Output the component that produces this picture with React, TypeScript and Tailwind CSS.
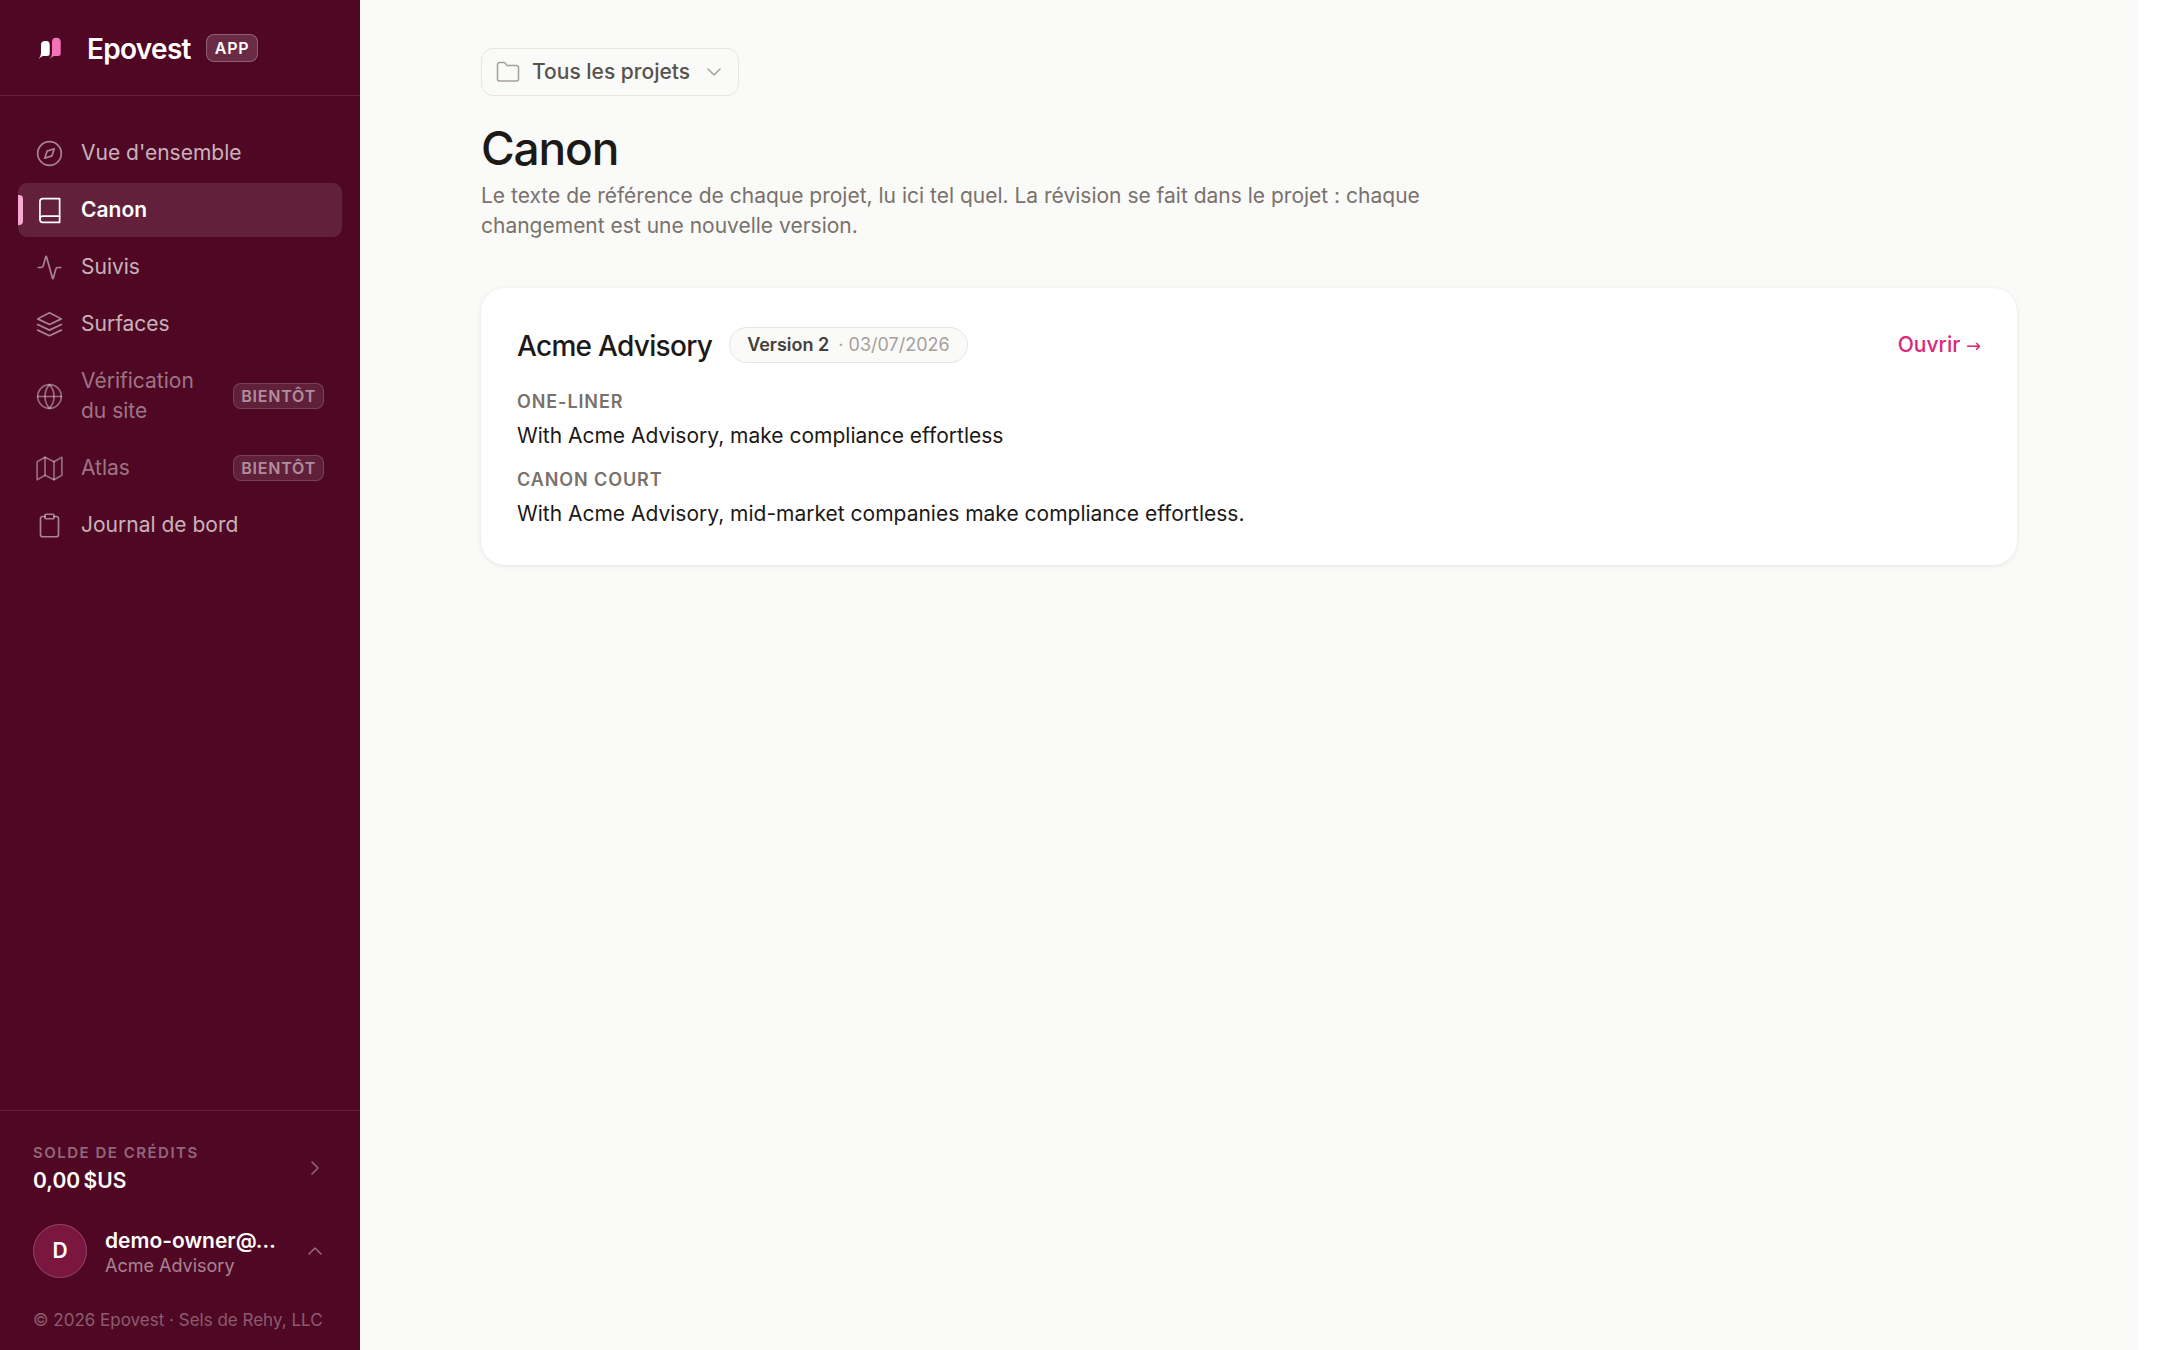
import type { ReactNode } from "react";
import {
  Activity,
  ChevronDown,
  ChevronRight,
  ChevronUp,
  Clipboard,
} from "lucide-react";

interface NavEntry {
  label: string;
  icon: ReactNode;
  active?: boolean;
  soon?: boolean;
}

interface Project {
  name: string;
  version: string;
  date: string;
  fields: { label: string; value: string }[];
}

interface GlyphProps {
  children: ReactNode;
  className?: string;
}

const Glyph = ({ children, className = "size-[27px]" }: GlyphProps) => (
  <svg
    viewBox="0 0 24 24"
    fill="none"
    stroke="currentColor"
    strokeWidth="1.5"
    strokeLinecap="round"
    strokeLinejoin="round"
    className={className}
  >
    {children}
  </svg>
);

const navEntries: NavEntry[] = [
  {
    label: "Vue d'ensemble",
    icon: (
      <Glyph>
        <circle cx="12" cy="12" r="10.5" />
        <path d="M16.2 7.8l-2 6.3-6.4 2.1 2-6.3z" />
      </Glyph>
    ),
  },
  {
    label: "Canon",
    active: true,
    icon: (
      <Glyph>
        <path d="M3.5 19.5A2.5 2.5 0 0 1 6 17h15" />
        <path d="M6 1.5h15v21H6A2.5 2.5 0 0 1 3.5 20V4A2.5 2.5 0 0 1 6 1.5z" />
      </Glyph>
    ),
  },
  { label: "Suivis", icon: <Activity className="size-[27px]" strokeWidth={1.5} /> },
  {
    label: "Surfaces",
    icon: (
      <Glyph>
        <path d="M12 1.5L1.5 7 12 12l10.5-5z" />
        <path d="M1.5 12L12 17l10.5-5" />
        <path d="M1.5 17L12 22l10.5-5" />
      </Glyph>
    ),
  },
  {
    label: "Vérification du site",
    soon: true,
    icon: (
      <Glyph>
        <circle cx="12" cy="12" r="10.5" />
        <path d="M1.5 12h21" />
        <path d="M12 1.5a15.3 15.3 0 0 1 4 10.5 15.3 15.3 0 0 1-4 10.5 15.3 15.3 0 0 1-4-10.5 15.3 15.3 0 0 1 4-10.5z" />
      </Glyph>
    ),
  },
  {
    label: "Atlas",
    soon: true,
    icon: (
      <Glyph>
        <path d="M1 6v16l7-4 8 4 7-4V2l-7 4-8-4z" />
        <path d="M8 2v16" />
        <path d="M16 6v16" />
      </Glyph>
    ),
  },
  {
    label: "Journal de bord",
    icon: <Clipboard className="size-[27px]" strokeWidth={1.5} />,
  },
];

const projects: Project[] = [
  {
    name: "Acme Advisory",
    version: "Version 2",
    date: "03/07/2026",
    fields: [
      { label: "One-liner", value: "With Acme Advisory, make compliance effortless" },
      {
        label: "Canon court",
        value: "With Acme Advisory, mid-market companies make compliance effortless.",
      },
    ],
  },
];

const Logo = () => (
  <svg viewBox="0 0 26 24" className="h-6 w-[26px]">
    <path
      d="M5 9Q5 5 9 5h1.5Q13.7 5 13.7 9V17.5Q13.7 20 11 20H7Q5 20.5 2.7 23Q5 20 5 17z"
      fill="#fff"
    />
    <path
      d="M16 6Q16 1.700 20.300 1.700T24.700 6V17.500Q24.700 20 22 20H18Q16 20.500 13.700 23Q16 20 16 17z"
      fill="#f472b6"
    />
  </svg>
);

const NavItem = ({ label, icon, active, soon }: NavEntry) => {
  const content = (
    <>
      {active && (
        <span className="absolute left-0 top-3 h-[30px] w-[5px] rounded-r bg-[#f9a8d4]" />
      )}
      <span
        className={
          active
            ? "shrink-0 text-white"
            : soon
              ? "shrink-0 text-white/40"
              : "shrink-0 text-white/50"
        }
      >
        {icon}
      </span>
      <span className="flex-1">{label}</span>
      {soon && (
        <span className="rounded-lg border border-white/15 bg-white/10 px-[7px] text-base leading-6 font-semibold tracking-wider uppercase text-white/50">
          Bientôt
        </span>
      )}
    </>
  );

  if (soon) {
    return (
      <li className="flex items-center gap-[18px] px-[18px] py-3 text-white/45">
        {content}
      </li>
    );
  }

  return (
    <li>
      <a
        href="#"
        aria-current={active ? "page" : undefined}
        className={
          active
            ? "relative flex items-center gap-[18px] rounded-[9px] bg-white/10 px-[18px] py-3 font-semibold text-white"
            : "flex items-center gap-[18px] px-[18px] py-3 text-white/70"
        }
      >
        {content}
      </a>
    </li>
  );
};

const Sidebar = () => (
  <aside className="flex w-[360px] shrink-0 flex-col bg-[#500724] text-white">
    <a href="#" className="flex h-24 items-center border-b border-white/10 px-9">
      <Logo />
      <span className="ml-[25px] pt-0.5 text-[28px] leading-9 font-semibold tracking-tight">
        Epovest
      </span>
      <span className="ml-[15px] rounded-lg border border-white/25 bg-white/15 px-2 text-base leading-[26px] font-semibold tracking-wider">
        APP
      </span>
    </a>
    <nav className="flex-1 px-[18px] pt-[30px]">
      <ul className="flex flex-col gap-[3px]">
        {navEntries.map((entry) => (
          <NavItem key={entry.label} {...entry} />
        ))}
      </ul>
    </nav>
    <div className="border-t border-white/10 px-[33px] pt-[29px] pb-4">
      <a href="#" className="flex items-center justify-between">
        <span>
          <span className="block text-[15px] leading-[26px] font-semibold tracking-widest uppercase text-white/40">
            Solde de crédits
          </span>
          <span className="block font-semibold">0,00{"\u202f"}$US</span>
        </span>
        <ChevronRight className="size-6 text-white/40" strokeWidth={1.5} />
      </a>
      <button type="button" className="mt-7 flex w-full items-center gap-[18px] text-left">
        <span className="flex size-[54px] shrink-0 items-center justify-center rounded-full border border-white/20 bg-[#7a1640] font-semibold">
          D
        </span>
        <span className="min-w-0 flex-1 pt-1">
          <span className="block leading-[26px] font-semibold">demo-owner@…</span>
          <span className="block text-lg leading-6 text-white/50">Acme Advisory</span>
        </span>
        <ChevronUp className="size-6 text-white/40" strokeWidth={1.5} />
      </button>
      <p className="mt-7 text-[17px] leading-7 text-white/35">
        © 2026 Epovest · Sels de Rehy, LLC
      </p>
    </div>
  </aside>
);

const ProjectCard = ({ name, version, date, fields }: Project) => (
  <article className="rounded-3xl bg-white px-9 pt-9 pb-[34px] shadow-[0_1px_4px_rgba(28,25,23,0.1)]">
    <header className="flex items-center">
      <h2 className="pt-0.5 text-[28px] leading-10 font-medium tracking-tight">{name}</h2>
      <span className="ml-[17px] rounded-full border border-[#e7e5e4] bg-[#fafaf9] px-[17px] text-lg leading-[34px] text-stone-400">
        <span className="mr-[9px] font-semibold text-stone-700">{version}</span>· {date}
      </span>
      <a href="#" className="ml-auto font-medium text-[#db2777]">
        Ouvrir <span className="font-['DejaVu_Sans',sans-serif] text-lg font-normal">→</span>
      </a>
    </header>
    <dl className="mt-[22px]">
      {fields.map((field) => (
        <div key={field.label} className="mb-[13px] last:mb-0">
          <dt className="text-lg leading-[27px] font-semibold tracking-wider uppercase text-stone-500">
            {field.label}
          </dt>
          <dd className="mt-1 leading-[34px]">{field.value}</dd>
        </div>
      ))}
    </dl>
  </article>
);

const App = () => {
  return (
    <div className="flex min-h-screen bg-white pr-[22px] font-['Inter',sans-serif] text-[21px] leading-[30px] text-stone-900">
      <Sidebar />
      <main className="flex-1 bg-[#fafaf9] pt-12">
        <div className="mx-auto max-w-[1536px]">
          <button
            type="button"
            className="flex h-12 items-center gap-3 rounded-xl border border-[#e7e5e4] pr-3 pl-3.5 font-medium text-stone-600"
          >
            <Glyph className="size-6 text-stone-400">
              <path d="M22.5 19a2 2 0 0 1-2 2h-17a2 2 0 0 1-2-2V4.5a2 2 0 0 1 2-2H8a1.5 1.5 0 0 1 1.2.6L11 5.500h9.500a2 2 0 0 1 2 2z" />
            </Glyph>
            Tous les projets
            <ChevronDown className="size-6 text-stone-400" strokeWidth={1.5} />
          </button>
          <h1 className="mt-[25px] text-[46px] leading-[54px] font-medium tracking-tight">
            Canon
          </h1>
          <p className="mt-1.5 max-w-[1008px] text-stone-500">
            Le texte de référence de chaque projet, lu ici tel quel. La révision se fait dans le
            projet : chaque changement est une nouvelle version.
          </p>
          <section className="mt-[47px] flex flex-col gap-6">
            {projects.map((project) => (
              <ProjectCard key={project.name} {...project} />
            ))}
          </section>
        </div>
      </main>
    </div>
  );
};

export default App;
